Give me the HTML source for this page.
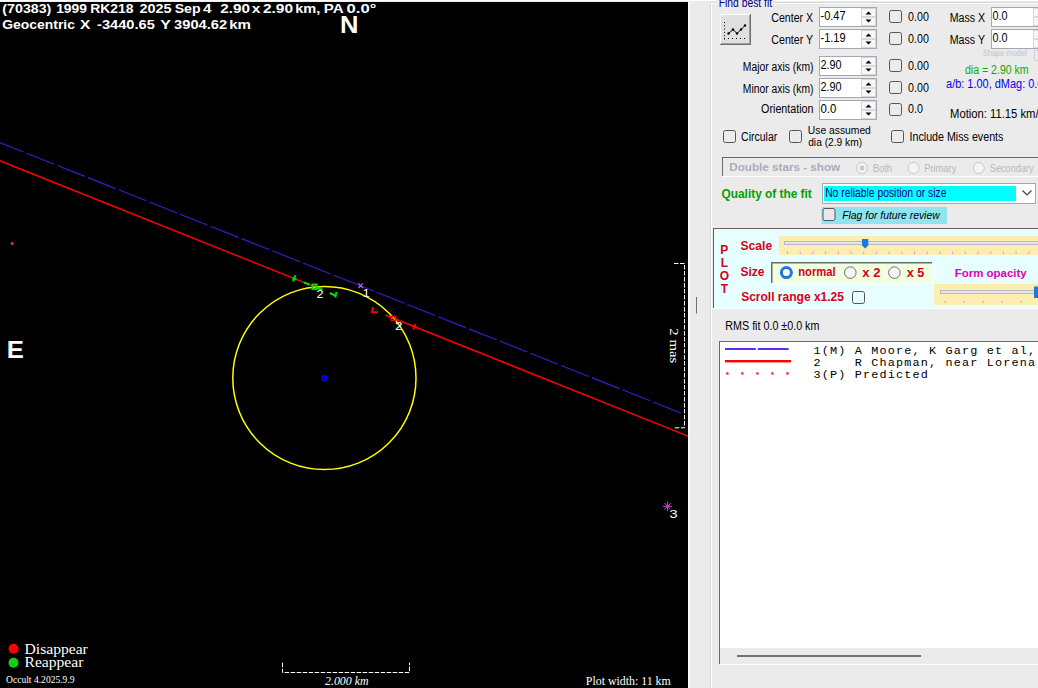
<!DOCTYPE html>
<html><head><meta charset="utf-8"><title>Occult</title>
<style>html,body{margin:0;padding:0;overflow:hidden;background:#ebebeb;}svg{display:block}</style></head>
<body><svg width="1038" height="688" viewBox="0 0 1038 688">
<rect x="0" y="0" width="1038" height="688" fill="#ebebeb" stroke="none" stroke-width="1" />
<rect x="0" y="0" width="1038" height="1" fill="#ffffff" stroke="none" stroke-width="1" />
<rect x="0" y="2" width="688" height="686" fill="#000" stroke="none" stroke-width="1" />
<text x="2.39" y="13" font-family='"Liberation Sans", sans-serif' font-size="13.5" fill="#ffffff" font-weight="bold" font-style="normal" textLength="48.98" lengthAdjust="spacingAndGlyphs" xml:space="preserve" >(70383)</text>
<text x="56.17" y="13" font-family='"Liberation Sans", sans-serif' font-size="13.5" fill="#ffffff" font-weight="bold" font-style="normal" textLength="30.71" lengthAdjust="spacingAndGlyphs" xml:space="preserve" >1999</text>
<text x="90.3" y="13" font-family='"Liberation Sans", sans-serif' font-size="13.5" fill="#ffffff" font-weight="bold" font-style="normal" textLength="43.26" lengthAdjust="spacingAndGlyphs" xml:space="preserve" >RK218</text>
<text x="139.49" y="13" font-family='"Liberation Sans", sans-serif' font-size="13.5" fill="#ffffff" font-weight="bold" font-style="normal" textLength="32.16" lengthAdjust="spacingAndGlyphs" xml:space="preserve" >2025</text>
<text x="174.68" y="13" font-family='"Liberation Sans", sans-serif' font-size="13.5" fill="#ffffff" font-weight="bold" font-style="normal" textLength="25.98" lengthAdjust="spacingAndGlyphs" xml:space="preserve" >Sep</text>
<text x="203.07" y="13" font-family='"Liberation Sans", sans-serif' font-size="13.5" fill="#ffffff" font-weight="bold" font-style="normal" textLength="8.42" lengthAdjust="spacingAndGlyphs" xml:space="preserve" >4</text>
<text x="220.27" y="13" font-family='"Liberation Sans", sans-serif' font-size="13.5" fill="#ffffff" font-weight="bold" font-style="normal" textLength="29.66" lengthAdjust="spacingAndGlyphs" xml:space="preserve" >2.90</text>
<text x="251.84" y="13" font-family='"Liberation Sans", sans-serif' font-size="13.5" fill="#ffffff" font-weight="bold" font-style="normal" textLength="8.65" lengthAdjust="spacingAndGlyphs" xml:space="preserve" >x</text>
<text x="262.96" y="13" font-family='"Liberation Sans", sans-serif' font-size="13.5" fill="#ffffff" font-weight="bold" font-style="normal" textLength="30.08" lengthAdjust="spacingAndGlyphs" xml:space="preserve" >2.90</text>
<text x="295.28" y="13" font-family='"Liberation Sans", sans-serif' font-size="13.5" fill="#ffffff" font-weight="bold" font-style="normal" textLength="25.11" lengthAdjust="spacingAndGlyphs" xml:space="preserve" >km,</text>
<text x="323.82" y="13" font-family='"Liberation Sans", sans-serif' font-size="13.5" fill="#ffffff" font-weight="bold" font-style="normal" textLength="19.86" lengthAdjust="spacingAndGlyphs" xml:space="preserve" >PA</text>
<text x="346.53" y="13" font-family='"Liberation Sans", sans-serif' font-size="13.5" fill="#ffffff" font-weight="bold" font-style="normal" textLength="29.82" lengthAdjust="spacingAndGlyphs" xml:space="preserve" >0.0°</text>
<text x="2.24" y="29" font-family='"Liberation Sans", sans-serif' font-size="13.5" fill="#ffffff" font-weight="bold" font-style="normal" textLength="72.66" lengthAdjust="spacingAndGlyphs" xml:space="preserve" >Geocentric</text>
<text x="80.04" y="29" font-family='"Liberation Sans", sans-serif' font-size="13.5" fill="#ffffff" font-weight="bold" font-style="normal" textLength="10.34" lengthAdjust="spacingAndGlyphs" xml:space="preserve" >X</text>
<text x="97.12" y="29" font-family='"Liberation Sans", sans-serif' font-size="13.5" fill="#ffffff" font-weight="bold" font-style="normal" textLength="57.69" lengthAdjust="spacingAndGlyphs" xml:space="preserve" >-3440.65</text>
<text x="160.38" y="29" font-family='"Liberation Sans", sans-serif' font-size="13.5" fill="#ffffff" font-weight="bold" font-style="normal" textLength="10.59" lengthAdjust="spacingAndGlyphs" xml:space="preserve" >Y</text>
<text x="174.13" y="29" font-family='"Liberation Sans", sans-serif' font-size="13.5" fill="#ffffff" font-weight="bold" font-style="normal" textLength="52.95" lengthAdjust="spacingAndGlyphs" xml:space="preserve" >3904.62</text>
<text x="229.15" y="29" font-family='"Liberation Sans", sans-serif' font-size="13.5" fill="#ffffff" font-weight="bold" font-style="normal" textLength="21.76" lengthAdjust="spacingAndGlyphs" xml:space="preserve" >km</text>
<text x="339.94" y="33" font-family='"Liberation Sans", sans-serif' font-size="23.5" fill="#ffffff" font-weight="bold" font-style="normal" textLength="18.48" lengthAdjust="spacingAndGlyphs" xml:space="preserve" >N</text>
<text x="6.83" y="358.3" font-family='"Liberation Sans", sans-serif' font-size="23.5" fill="#ffffff" font-weight="bold" font-style="normal" textLength="17.12" lengthAdjust="spacingAndGlyphs" xml:space="preserve" >E</text>
<circle cx="12.2" cy="243.6" r="1.5" fill="#ff1493"/>
<line x1="-5.00" y1="140.71" x2="23.45" y2="152.01" stroke="#4a14d0" stroke-width="1.15"/>
<line x1="26.55" y1="153.24" x2="54.17" y2="164.21" stroke="#4a14d0" stroke-width="1.15"/>
<line x1="57.27" y1="165.44" x2="84.89" y2="176.40" stroke="#4a14d0" stroke-width="1.15"/>
<line x1="87.99" y1="177.63" x2="115.61" y2="188.60" stroke="#4a14d0" stroke-width="1.15"/>
<line x1="118.71" y1="189.83" x2="146.33" y2="200.79" stroke="#4a14d0" stroke-width="1.15"/>
<line x1="149.43" y1="202.02" x2="177.05" y2="212.99" stroke="#4a14d0" stroke-width="1.15"/>
<line x1="180.15" y1="214.22" x2="207.77" y2="225.18" stroke="#4a14d0" stroke-width="1.15"/>
<line x1="210.87" y1="226.42" x2="238.49" y2="237.38" stroke="#4a14d0" stroke-width="1.15"/>
<line x1="241.59" y1="238.61" x2="269.21" y2="249.58" stroke="#4a14d0" stroke-width="1.15"/>
<line x1="272.31" y1="250.81" x2="299.93" y2="261.77" stroke="#4a14d0" stroke-width="1.15"/>
<line x1="303.03" y1="263.00" x2="330.65" y2="273.97" stroke="#4a14d0" stroke-width="1.15"/>
<line x1="333.75" y1="275.20" x2="373.65" y2="291.04" stroke="#4a14d0" stroke-width="1.15"/>
<line x1="376.75" y1="292.27" x2="404.37" y2="303.23" stroke="#4a14d0" stroke-width="1.15"/>
<line x1="407.47" y1="304.47" x2="435.09" y2="315.43" stroke="#4a14d0" stroke-width="1.15"/>
<line x1="438.19" y1="316.66" x2="465.81" y2="327.63" stroke="#4a14d0" stroke-width="1.15"/>
<line x1="468.91" y1="328.86" x2="496.53" y2="339.82" stroke="#4a14d0" stroke-width="1.15"/>
<line x1="499.63" y1="341.05" x2="527.25" y2="352.02" stroke="#4a14d0" stroke-width="1.15"/>
<line x1="530.35" y1="353.25" x2="557.97" y2="364.21" stroke="#4a14d0" stroke-width="1.15"/>
<line x1="561.07" y1="365.44" x2="588.69" y2="376.41" stroke="#4a14d0" stroke-width="1.15"/>
<line x1="591.79" y1="377.64" x2="619.41" y2="388.61" stroke="#4a14d0" stroke-width="1.15"/>
<line x1="622.51" y1="389.84" x2="650.13" y2="400.80" stroke="#4a14d0" stroke-width="1.15"/>
<line x1="653.23" y1="402.03" x2="680.80" y2="412.98" stroke="#4a14d0" stroke-width="1.15"/>
<line x1="-2" y1="160.1" x2="314.5" y2="286.70000000000005" stroke="#ff0000" stroke-width="1.45" />
<line x1="385.3" y1="315.02" x2="688" y2="436.1" stroke="#ff0000" stroke-width="1.45" />
<circle cx="324.4" cy="378" r="91.6" fill="none" stroke="#ffff00" stroke-width="1.5"/>
<circle cx="324.5" cy="378.1" r="2.1" fill="#000" stroke="#0000ff" stroke-width="2.2"/>
<polyline points="674,263.5 684.5,263.5 684.5,427.8 674,427.8" fill="none" stroke="#fff" stroke-width="1" stroke-dasharray="4.5 1.5"/>
<text x="0" y="0" transform="translate(670,328.3) rotate(90)" font-family='"Liberation Serif", serif' font-size="13.5" fill="#fff" textLength="35" lengthAdjust="spacingAndGlyphs">2 mas</text>
<polyline points="282.5,662.7 282.5,672.5 409.5,672.5 409.5,662.7" fill="none" stroke="#fff" stroke-width="1" stroke-dasharray="4.5 1.5"/>
<text x="325.0" y="685.4" font-family='"Liberation Serif", serif' font-size="12.5" fill="#ffffff" font-weight="normal" font-style="italic" textLength="43.49" lengthAdjust="spacingAndGlyphs" xml:space="preserve" >2.000 km</text>
<text x="585.84" y="685.2" font-family='"Liberation Serif", serif' font-size="12.5" fill="#ffffff" font-weight="normal" font-style="normal" textLength="84.91" lengthAdjust="spacingAndGlyphs" xml:space="preserve" >Plot width: 11 km</text>
<circle cx="13.5" cy="648.7" r="5" fill="#ff0000"/>
<circle cx="13.5" cy="662.8" r="5" fill="#10d010"/>
<text x="24.53" y="653.5" font-family='"Liberation Serif", serif' font-size="13.6" fill="#ffffff" font-weight="normal" font-style="normal" textLength="63.3" lengthAdjust="spacingAndGlyphs" xml:space="preserve" >Disappear</text>
<text x="24.53" y="667" font-family='"Liberation Serif", serif' font-size="13.6" fill="#ffffff" font-weight="normal" font-style="normal" textLength="58.83" lengthAdjust="spacingAndGlyphs" xml:space="preserve" >Reappear</text>
<text x="6.02" y="683" font-family='"Liberation Serif", serif' font-size="9.8" fill="#ffffff" font-weight="normal" font-style="normal" textLength="68.57" lengthAdjust="spacingAndGlyphs" xml:space="preserve" >Occult 4.2025.9.9</text>
<line x1="663.1" y1="506.3" x2="672.1" y2="506.3" stroke="#e040e0" stroke-width="1" />
<line x1="664.42" y1="503.12" x2="670.78" y2="509.48" stroke="#e040e0" stroke-width="1" />
<line x1="667.6" y1="501.8" x2="667.6" y2="510.8" stroke="#e040e0" stroke-width="1" />
<line x1="670.78" y1="503.12" x2="664.42" y2="509.48" stroke="#e040e0" stroke-width="1" />
<text x="669.52" y="517.7" font-family='"Liberation Sans", sans-serif' font-size="11" fill="#ffffff" font-weight="normal" font-style="normal" textLength="8.08" lengthAdjust="spacingAndGlyphs" xml:space="preserve" >3</text>
<path d="M295.5,275 L293,281.5 M292.3,278.5 L296.5,279.5" stroke="#00dd00" stroke-width="2" fill="none"/>
<line x1="303.9" y1="282.46000000000004" x2="309.7" y2="284.78" stroke="#00dd00" stroke-width="2.2" />
<line x1="316.6" y1="287.54" x2="322.4" y2="289.86" stroke="#00dd00" stroke-width="2.2" />
<rect x="312.5" y="284.5" width="4" height="4.6" fill="none" stroke="#00dd00" stroke-width="2"/>
<text x="316.56" y="297.7" font-family='"Liberation Sans", sans-serif' font-size="11" fill="#ffffff" font-weight="normal" font-style="normal" textLength="7.09" lengthAdjust="spacingAndGlyphs" xml:space="preserve" >2</text>
<path d="M329.8,293 L335,295.5 M336.5,292 L335.3,297.5" stroke="#00dd00" stroke-width="2" fill="none"/>
<path d="M358.3,283.3 L363,288 M358.3,288 L363,283.3" stroke="#a070f0" stroke-width="1.2" fill="none"/>
<text x="362.87" y="296.5" font-family='"Liberation Sans", sans-serif' font-size="11" fill="#ffffff" font-weight="normal" font-style="normal" textLength="6.9" lengthAdjust="spacingAndGlyphs" xml:space="preserve" >1</text>
<path d="M373.2,307 L371.5,313 M371,312 L377.8,312.2" stroke="#ff0000" stroke-width="2" fill="none"/>
<rect x="391.5" y="316.5" width="4" height="4" fill="none" stroke="#ff0000" stroke-width="1.6"/>
<text x="395.13" y="329.6" font-family='"Liberation Sans", sans-serif' font-size="11" fill="#ffffff" font-weight="normal" font-style="normal" textLength="7.46" lengthAdjust="spacingAndGlyphs" xml:space="preserve" >2</text>
<path d="M415.5,324 L413.3,329.5 M412.3,326 L417,327.5" stroke="#ff0000" stroke-width="2" fill="none"/>
<rect x="688" y="2" width="1.5" height="686" fill="#ffffff" stroke="none" stroke-width="1" />
<rect x="710" y="2" width="1" height="686" fill="#d8d8d8" stroke="none" stroke-width="1" />
<rect x="711" y="2" width="1" height="686" fill="#ffffff" stroke="none" stroke-width="1" />
<rect x="710" y="2" width="328" height="1" fill="#d8d8d8" stroke="none" stroke-width="1" />
<rect x="710" y="3" width="328" height="1" fill="#ffffff" stroke="none" stroke-width="1" />
<rect x="716" y="0" width="58" height="8" fill="#ebebeb" stroke="none" stroke-width="1" />
<text x="718.67" y="6.6" font-family='"Liberation Sans", sans-serif' font-size="12" fill="#000080" font-weight="normal" font-style="normal" textLength="53.42" lengthAdjust="spacingAndGlyphs" xml:space="preserve" >Find best fit</text>
<rect x="720" y="14" width="31" height="31" fill="#e0e0e0" stroke="none" stroke-width="1" />
<rect x="720" y="14" width="31" height="1" fill="#fff" stroke="none" stroke-width="1" />
<rect x="720" y="14" width="1" height="31" fill="#fff" stroke="none" stroke-width="1" />
<rect x="720" y="44" width="31" height="1" fill="#707070" stroke="none" stroke-width="1" />
<rect x="750" y="14" width="1" height="31" fill="#707070" stroke="none" stroke-width="1" />
<rect x="721" y="43" width="29" height="1" fill="#a0a0a0" stroke="none" stroke-width="1" />
<rect x="749" y="15" width="1" height="29" fill="#a0a0a0" stroke="none" stroke-width="1" />
<rect x="724" y="22.0" width="1" height="1" fill="#000" stroke="none" stroke-width="1" />
<rect x="724" y="25.3" width="1" height="1" fill="#000" stroke="none" stroke-width="1" />
<rect x="724" y="28.6" width="1" height="1" fill="#000" stroke="none" stroke-width="1" />
<rect x="724" y="31.9" width="1" height="1" fill="#000" stroke="none" stroke-width="1" />
<rect x="724" y="35.2" width="1" height="1" fill="#000" stroke="none" stroke-width="1" />
<rect x="724" y="38.5" width="1" height="1" fill="#000" stroke="none" stroke-width="1" />
<rect x="724" y="38" width="1" height="1" fill="#000" stroke="none" stroke-width="1" />
<rect x="728" y="38" width="1" height="1" fill="#000" stroke="none" stroke-width="1" />
<rect x="732" y="38" width="1" height="1" fill="#000" stroke="none" stroke-width="1" />
<rect x="736" y="38" width="1" height="1" fill="#000" stroke="none" stroke-width="1" />
<rect x="740" y="38" width="1" height="1" fill="#000" stroke="none" stroke-width="1" />
<rect x="744" y="38" width="1" height="1" fill="#000" stroke="none" stroke-width="1" />
<polyline points="728.5,33.5 733,29.5 737,33.5 741,29.5 745,25.5" fill="none" stroke="#000" stroke-width="1"/>
<circle cx="728.5" cy="33.5" r="1.2" fill="#000"/>
<circle cx="733" cy="29.5" r="1.2" fill="#000"/>
<circle cx="737" cy="33.5" r="1.2" fill="#000"/>
<circle cx="741" cy="29.5" r="1.2" fill="#000"/>
<circle cx="745" cy="25.5" r="1.2" fill="#000"/>
<text x="771.37" y="21.7" font-family='"Liberation Sans", sans-serif' font-size="12" fill="#000" font-weight="normal" font-style="normal" textLength="41.65" lengthAdjust="spacingAndGlyphs" xml:space="preserve" >Center X</text>
<rect x="819.5" y="7.5" width="57" height="19" fill="#fff" stroke="#a4a8b0" stroke-width="1" />
<text x="820.51" y="19.8" font-family='"Liberation Sans", sans-serif' font-size="12" fill="#000" font-weight="normal" font-style="normal" textLength="25.04" lengthAdjust="spacingAndGlyphs" xml:space="preserve" >-0.47</text>
<rect x="861.5" y="8.5" width="14" height="8.0" fill="#f8f8f8" stroke="#d8d8d8" stroke-width="1" />
<rect x="861.5" y="17.5" width="14" height="8.0" fill="#f8f8f8" stroke="#d8d8d8" stroke-width="1" />
<polygon points="865.5,14.5 871.5,14.5 868.5,11.5" fill="#000"/>
<polygon points="865.5,19.5 871.5,19.5 868.5,22.5" fill="#000"/>
<rect x="889.5" y="10.5" width="12" height="12" fill="none" stroke="#555" stroke-width="1" rx="2"/>
<text x="908.07" y="21.2" font-family='"Liberation Sans", sans-serif' font-size="12" fill="#000" font-weight="normal" font-style="normal" textLength="20.82" lengthAdjust="spacingAndGlyphs" xml:space="preserve" >0.00</text>
<text x="771.37" y="43.7" font-family='"Liberation Sans", sans-serif' font-size="12" fill="#000" font-weight="normal" font-style="normal" textLength="41.68" lengthAdjust="spacingAndGlyphs" xml:space="preserve" >Center Y</text>
<rect x="819.5" y="29.5" width="57" height="19" fill="#fff" stroke="#a4a8b0" stroke-width="1" />
<text x="820.51" y="41.8" font-family='"Liberation Sans", sans-serif' font-size="12" fill="#000" font-weight="normal" font-style="normal" textLength="24.98" lengthAdjust="spacingAndGlyphs" xml:space="preserve" >-1.19</text>
<rect x="861.5" y="30.5" width="14" height="8.0" fill="#f8f8f8" stroke="#d8d8d8" stroke-width="1" />
<rect x="861.5" y="39.5" width="14" height="8.0" fill="#f8f8f8" stroke="#d8d8d8" stroke-width="1" />
<polygon points="865.5,36.5 871.5,36.5 868.5,33.5" fill="#000"/>
<polygon points="865.5,41.5 871.5,41.5 868.5,44.5" fill="#000"/>
<rect x="889.5" y="32.5" width="12" height="12" fill="none" stroke="#555" stroke-width="1" rx="2"/>
<text x="908.07" y="43.2" font-family='"Liberation Sans", sans-serif' font-size="12" fill="#000" font-weight="normal" font-style="normal" textLength="20.82" lengthAdjust="spacingAndGlyphs" xml:space="preserve" >0.00</text>
<text x="742.77" y="70.8" font-family='"Liberation Sans", sans-serif' font-size="12" fill="#000" font-weight="normal" font-style="normal" textLength="70.69" lengthAdjust="spacingAndGlyphs" xml:space="preserve" >Major axis (km)</text>
<rect x="819.5" y="56.5" width="57" height="19" fill="#fff" stroke="#a4a8b0" stroke-width="1" />
<text x="820.46" y="68.8" font-family='"Liberation Sans", sans-serif' font-size="12" fill="#000" font-weight="normal" font-style="normal" textLength="21.14" lengthAdjust="spacingAndGlyphs" xml:space="preserve" >2.90</text>
<rect x="861.5" y="57.5" width="14" height="8.0" fill="#f8f8f8" stroke="#d8d8d8" stroke-width="1" />
<rect x="861.5" y="66.5" width="14" height="8.0" fill="#f8f8f8" stroke="#d8d8d8" stroke-width="1" />
<polygon points="865.5,63.5 871.5,63.5 868.5,60.5" fill="#000"/>
<polygon points="865.5,68.5 871.5,68.5 868.5,71.5" fill="#000"/>
<rect x="889.5" y="59.5" width="12" height="12" fill="none" stroke="#555" stroke-width="1" rx="2"/>
<text x="908.07" y="70.3" font-family='"Liberation Sans", sans-serif' font-size="12" fill="#000" font-weight="normal" font-style="normal" textLength="20.82" lengthAdjust="spacingAndGlyphs" xml:space="preserve" >0.00</text>
<text x="742.77" y="92.5" font-family='"Liberation Sans", sans-serif' font-size="12" fill="#000" font-weight="normal" font-style="normal" textLength="70.69" lengthAdjust="spacingAndGlyphs" xml:space="preserve" >Minor axis (km)</text>
<rect x="819.5" y="78.5" width="57" height="19" fill="#fff" stroke="#a4a8b0" stroke-width="1" />
<text x="820.46" y="90.8" font-family='"Liberation Sans", sans-serif' font-size="12" fill="#000" font-weight="normal" font-style="normal" textLength="21.14" lengthAdjust="spacingAndGlyphs" xml:space="preserve" >2.90</text>
<rect x="861.5" y="79.5" width="14" height="8.0" fill="#f8f8f8" stroke="#d8d8d8" stroke-width="1" />
<rect x="861.5" y="88.5" width="14" height="8.0" fill="#f8f8f8" stroke="#d8d8d8" stroke-width="1" />
<polygon points="865.5,85.5 871.5,85.5 868.5,82.5" fill="#000"/>
<polygon points="865.5,90.5 871.5,90.5 868.5,93.5" fill="#000"/>
<rect x="889.5" y="81.5" width="12" height="12" fill="none" stroke="#555" stroke-width="1" rx="2"/>
<text x="908.07" y="92.0" font-family='"Liberation Sans", sans-serif' font-size="12" fill="#000" font-weight="normal" font-style="normal" textLength="20.82" lengthAdjust="spacingAndGlyphs" xml:space="preserve" >0.00</text>
<text x="761.12" y="113.3" font-family='"Liberation Sans", sans-serif' font-size="12" fill="#000" font-weight="normal" font-style="normal" textLength="52.4" lengthAdjust="spacingAndGlyphs" xml:space="preserve" >Orientation</text>
<rect x="819.5" y="100.5" width="57" height="19" fill="#fff" stroke="#a4a8b0" stroke-width="1" />
<text x="820.54" y="112.8" font-family='"Liberation Sans", sans-serif' font-size="12" fill="#000" font-weight="normal" font-style="normal" textLength="15.86" lengthAdjust="spacingAndGlyphs" xml:space="preserve" >0.0</text>
<rect x="861.5" y="101.5" width="14" height="8.0" fill="#f8f8f8" stroke="#d8d8d8" stroke-width="1" />
<rect x="861.5" y="110.5" width="14" height="8.0" fill="#f8f8f8" stroke="#d8d8d8" stroke-width="1" />
<polygon points="865.5,107.5 871.5,107.5 868.5,104.5" fill="#000"/>
<polygon points="865.5,112.5 871.5,112.5 868.5,115.5" fill="#000"/>
<rect x="889.5" y="103.5" width="12" height="12" fill="none" stroke="#555" stroke-width="1" rx="2"/>
<text x="908.07" y="112.8" font-family='"Liberation Sans", sans-serif' font-size="12" fill="#000" font-weight="normal" font-style="normal" textLength="14.91" lengthAdjust="spacingAndGlyphs" xml:space="preserve" >0.0</text>
<text x="949.65" y="21.8" font-family='"Liberation Sans", sans-serif' font-size="12" fill="#000" font-weight="normal" font-style="normal" textLength="35.41" lengthAdjust="spacingAndGlyphs" xml:space="preserve" >Mass X</text>
<text x="949.65" y="43.8" font-family='"Liberation Sans", sans-serif' font-size="12" fill="#000" font-weight="normal" font-style="normal" textLength="35.38" lengthAdjust="spacingAndGlyphs" xml:space="preserve" >Mass Y</text>
<rect x="991.5" y="7.5" width="57" height="19" fill="#fff" stroke="#a4a8b0" stroke-width="1" />
<text x="992.57" y="19.8" font-family='"Liberation Sans", sans-serif' font-size="12" fill="#000" font-weight="normal" font-style="normal" textLength="15.01" lengthAdjust="spacingAndGlyphs" xml:space="preserve" >0.0</text>
<rect x="1033.5" y="8.5" width="14" height="8.0" fill="#f8f8f8" stroke="#d8d8d8" stroke-width="1" />
<rect x="1033.5" y="17.5" width="14" height="8.0" fill="#f8f8f8" stroke="#d8d8d8" stroke-width="1" />
<polygon points="1037.5,14.5 1043.5,14.5 1040.5,11.5" fill="#000"/>
<polygon points="1037.5,19.5 1043.5,19.5 1040.5,22.5" fill="#000"/>
<rect x="991.5" y="29.5" width="57" height="19" fill="#fff" stroke="#a4a8b0" stroke-width="1" />
<text x="992.57" y="41.8" font-family='"Liberation Sans", sans-serif' font-size="12" fill="#000" font-weight="normal" font-style="normal" textLength="15.01" lengthAdjust="spacingAndGlyphs" xml:space="preserve" >0.0</text>
<rect x="1033.5" y="30.5" width="14" height="8.0" fill="#f8f8f8" stroke="#d8d8d8" stroke-width="1" />
<rect x="1033.5" y="39.5" width="14" height="8.0" fill="#f8f8f8" stroke="#d8d8d8" stroke-width="1" />
<polygon points="1037.5,36.5 1043.5,36.5 1040.5,33.5" fill="#000"/>
<polygon points="1037.5,41.5 1043.5,41.5 1040.5,44.5" fill="#000"/>
<text x="982.76" y="56" font-family='"Liberation Sans", sans-serif' font-size="9" fill="#c4c4cc" font-weight="normal" font-style="normal" textLength="44.05" lengthAdjust="spacingAndGlyphs" xml:space="preserve" >Shape model</text>
<rect x="1034.5" y="50.5" width="8" height="10" fill="none" stroke="#d0d0d0" stroke-width="1" />
<text x="964.98" y="73.7" font-family='"Liberation Sans", sans-serif' font-size="12" fill="#10a800" font-weight="normal" font-style="normal" textLength="63.67" lengthAdjust="spacingAndGlyphs" xml:space="preserve" >dia = 2.90 km</text>
<text x="946.06" y="87.9" font-family='"Liberation Sans", sans-serif' font-size="12" fill="#0000ff" font-weight="normal" font-style="normal" textLength="97.41" lengthAdjust="spacingAndGlyphs" xml:space="preserve" >a/b: 1.00, dMag: 0.0</text>
<text x="950.1" y="118" font-family='"Liberation Sans", sans-serif' font-size="12" fill="#000" font-weight="normal" font-style="normal" textLength="94.09" lengthAdjust="spacingAndGlyphs" xml:space="preserve" >Motion: 11.15 km/s</text>
<rect x="723.5" y="130.5" width="12" height="12" fill="none" stroke="#555" stroke-width="1" rx="2"/>
<text x="741.08" y="140.8" font-family='"Liberation Sans", sans-serif' font-size="12" fill="#000" font-weight="normal" font-style="normal" textLength="36.13" lengthAdjust="spacingAndGlyphs" xml:space="preserve" >Circular</text>
<rect x="789.5" y="130.5" width="12" height="12" fill="none" stroke="#555" stroke-width="1" rx="2"/>
<text x="807.83" y="134.2" font-family='"Liberation Sans", sans-serif' font-size="11.5" fill="#000" font-weight="normal" font-style="normal" textLength="63.03" lengthAdjust="spacingAndGlyphs" xml:space="preserve" >Use assumed</text>
<text x="808.19" y="146.4" font-family='"Liberation Sans", sans-serif' font-size="11.5" fill="#000" font-weight="normal" font-style="normal" textLength="53.87" lengthAdjust="spacingAndGlyphs" xml:space="preserve" >dia (2.9 km)</text>
<rect x="891.5" y="130.5" width="12" height="12" fill="none" stroke="#555" stroke-width="1" rx="2"/>
<text x="909.54" y="140.7" font-family='"Liberation Sans", sans-serif' font-size="12" fill="#000" font-weight="normal" font-style="normal" textLength="93.86" lengthAdjust="spacingAndGlyphs" xml:space="preserve" >Include Miss events</text>
<rect x="722" y="157" width="316" height="1" fill="#6a6a6a" stroke="none" stroke-width="1" />
<rect x="722" y="157" width="1" height="19" fill="#6a6a6a" stroke="none" stroke-width="1" />
<rect x="722" y="176" width="316" height="1" fill="#ffffff" stroke="none" stroke-width="1" />
<text x="729.24" y="170.6" font-family='"Liberation Sans", sans-serif' font-size="11.5" fill="#b0aab8" font-weight="bold" font-style="normal" textLength="110.92" lengthAdjust="spacingAndGlyphs" xml:space="preserve" >Double stars - show</text>
<circle cx="862" cy="168" r="5.5" fill="#f4f4f4" stroke="#c8c8c8" stroke-width="1"/>
<text x="872.64" y="171.8" font-family='"Liberation Sans", sans-serif' font-size="10" fill="#b8b8c0" font-weight="normal" font-style="normal" textLength="19.49" lengthAdjust="spacingAndGlyphs" xml:space="preserve" >Both</text>
<circle cx="913.5" cy="168" r="5.5" fill="#f4f4f4" stroke="#c8c8c8" stroke-width="1"/>
<text x="924.15" y="171.8" font-family='"Liberation Sans", sans-serif' font-size="10" fill="#b8b8c0" font-weight="normal" font-style="normal" textLength="32.24" lengthAdjust="spacingAndGlyphs" xml:space="preserve" >Primary</text>
<circle cx="978.8" cy="168" r="5.5" fill="#f4f4f4" stroke="#c8c8c8" stroke-width="1"/>
<text x="989.79" y="171.8" font-family='"Liberation Sans", sans-serif' font-size="10" fill="#b8b8c0" font-weight="normal" font-style="normal" textLength="43.92" lengthAdjust="spacingAndGlyphs" xml:space="preserve" >Secondary</text>
<circle cx="862" cy="168" r="2.5" fill="#c8c8c8"/>
<text x="721.53" y="198" font-family='"Liberation Sans", sans-serif' font-size="12" fill="#00a000" font-weight="bold" font-style="normal" textLength="90.31" lengthAdjust="spacingAndGlyphs" xml:space="preserve" >Quality of the fit</text>
<rect x="822.5" y="183.5" width="213" height="20" fill="#fff" stroke="#a8a8a8" stroke-width="1" />
<rect x="824" y="186" width="192" height="15" fill="#00ffff" stroke="none" stroke-width="1" />
<text x="825.17" y="196.6" font-family='"Liberation Sans", sans-serif' font-size="12" fill="#000080" font-weight="normal" font-style="normal" textLength="121.23" lengthAdjust="spacingAndGlyphs" xml:space="preserve" >No reliable position or size</text>
<polyline points="1022.5,190.5 1027,195 1031.5,190.5" fill="none" stroke="#404040" stroke-width="1.2"/>
<rect x="821.5" y="207" width="125.5" height="17" fill="#90e4f0" stroke="none" stroke-width="1" />
<rect x="823.0" y="208.5" width="12" height="12" fill="#e8e8ec" stroke="#555" stroke-width="1" rx="2"/>
<text x="842.19" y="218.8" font-family='"Liberation Sans", sans-serif' font-size="11.5" fill="#000" font-weight="normal" font-style="italic" textLength="97.47" lengthAdjust="spacingAndGlyphs" xml:space="preserve" >Flag for future review</text>
<rect x="713" y="228" width="325" height="80" fill="#e8ffff" stroke="none" stroke-width="1" />
<rect x="713" y="228" width="325" height="1" fill="#6a5a6a" stroke="none" stroke-width="1" />
<rect x="713" y="228" width="1" height="80" fill="#6a5a6a" stroke="none" stroke-width="1" />
<rect x="713" y="308" width="325" height="1" fill="#ffffff" stroke="none" stroke-width="1" />
<text x="724.3" y="253.5" font-family='"Liberation Sans", sans-serif' font-size="12" fill="#d40020" font-weight="bold" text-anchor="middle">P</text>
<text x="724.3" y="266.8" font-family='"Liberation Sans", sans-serif' font-size="12" fill="#d40020" font-weight="bold" text-anchor="middle">L</text>
<text x="724.3" y="280" font-family='"Liberation Sans", sans-serif' font-size="12" fill="#d40020" font-weight="bold" text-anchor="middle">O</text>
<text x="724.3" y="293" font-family='"Liberation Sans", sans-serif' font-size="12" fill="#d40020" font-weight="bold" text-anchor="middle">T</text>
<text x="740.54" y="249.7" font-family='"Liberation Sans", sans-serif' font-size="12" fill="#d40020" font-weight="bold" font-style="normal" textLength="31.63" lengthAdjust="spacingAndGlyphs" xml:space="preserve" >Scale</text>
<rect x="779" y="236" width="259" height="19" fill="#fcedb0" stroke="none" stroke-width="1" />
<rect x="784.5" y="241.5" width="254" height="3" fill="#e4e4ec" stroke="#b8b8c8" stroke-width="1" />
<path d="M862,239 h6.3 v6.5 l-3.15,3 l-3.15,-3 z" fill="#1e78e0"/>
<rect x="787.0" y="251.5" width="1" height="2.5" fill="#e890e0" stroke="none" stroke-width="1" />
<rect x="799.7" y="251.5" width="1" height="2.5" fill="#e890e0" stroke="none" stroke-width="1" />
<rect x="812.4" y="251.5" width="1" height="2.5" fill="#e890e0" stroke="none" stroke-width="1" />
<rect x="825.1" y="251.5" width="1" height="2.5" fill="#e890e0" stroke="none" stroke-width="1" />
<rect x="837.8" y="251.5" width="1" height="2.5" fill="#e890e0" stroke="none" stroke-width="1" />
<rect x="850.5" y="251.5" width="1" height="2.5" fill="#e890e0" stroke="none" stroke-width="1" />
<rect x="863.2" y="251.5" width="1" height="2.5" fill="#e890e0" stroke="none" stroke-width="1" />
<rect x="875.9" y="251.5" width="1" height="2.5" fill="#e890e0" stroke="none" stroke-width="1" />
<rect x="888.6" y="251.5" width="1" height="2.5" fill="#e890e0" stroke="none" stroke-width="1" />
<rect x="901.3" y="251.5" width="1" height="2.5" fill="#e890e0" stroke="none" stroke-width="1" />
<rect x="914.0" y="251.5" width="1" height="2.5" fill="#e890e0" stroke="none" stroke-width="1" />
<rect x="926.7" y="251.5" width="1" height="2.5" fill="#e890e0" stroke="none" stroke-width="1" />
<rect x="939.4" y="251.5" width="1" height="2.5" fill="#e890e0" stroke="none" stroke-width="1" />
<rect x="952.1" y="251.5" width="1" height="2.5" fill="#e890e0" stroke="none" stroke-width="1" />
<rect x="964.8" y="251.5" width="1" height="2.5" fill="#e890e0" stroke="none" stroke-width="1" />
<rect x="977.5" y="251.5" width="1" height="2.5" fill="#e890e0" stroke="none" stroke-width="1" />
<rect x="990.2" y="251.5" width="1" height="2.5" fill="#e890e0" stroke="none" stroke-width="1" />
<rect x="1002.9" y="251.5" width="1" height="2.5" fill="#e890e0" stroke="none" stroke-width="1" />
<rect x="1015.6" y="251.5" width="1" height="2.5" fill="#e890e0" stroke="none" stroke-width="1" />
<rect x="1028.3" y="251.5" width="1" height="2.5" fill="#e890e0" stroke="none" stroke-width="1" />
<text x="740.54" y="275.5" font-family='"Liberation Sans", sans-serif' font-size="12" fill="#d40020" font-weight="bold" font-style="normal" textLength="23.89" lengthAdjust="spacingAndGlyphs" xml:space="preserve" >Size</text>
<rect x="771" y="262" width="162" height="21" fill="#f0ffe0" stroke="none" stroke-width="1" />
<rect x="771" y="262" width="162" height="1.5" fill="#6a6a6a" stroke="none" stroke-width="1" />
<rect x="771" y="262" width="1.5" height="21" fill="#6a6a6a" stroke="none" stroke-width="1" />
<rect x="771" y="283" width="162" height="1" fill="#ffffff" stroke="none" stroke-width="1" />
<rect x="932" y="262" width="1" height="21" fill="#ffffff" stroke="none" stroke-width="1" />
<circle cx="786.4" cy="272.6" r="5" fill="#fff" stroke="#1e78e0" stroke-width="3"/>
<text x="798.27" y="276.2" font-family='"Liberation Sans", sans-serif' font-size="12" fill="#d40020" font-weight="bold" font-style="normal" textLength="37.4" lengthAdjust="spacingAndGlyphs" xml:space="preserve" >normal</text>
<circle cx="850.3" cy="272.6" r="5.8" fill="#f4f4f4" stroke="#707070" stroke-width="1"/>
<text x="862.37" y="276.6" font-family='"Liberation Sans", sans-serif' font-size="12" fill="#d40020" font-weight="bold" font-style="normal" textLength="18.26" lengthAdjust="spacingAndGlyphs" xml:space="preserve" >x 2</text>
<circle cx="894.4" cy="272.6" r="5.8" fill="#f4f4f4" stroke="#707070" stroke-width="1"/>
<text x="906.67" y="276.6" font-family='"Liberation Sans", sans-serif' font-size="12" fill="#d40020" font-weight="bold" font-style="normal" textLength="17.65" lengthAdjust="spacingAndGlyphs" xml:space="preserve" >x 5</text>
<text x="954.76" y="276.6" font-family='"Liberation Sans", sans-serif' font-size="11.5" fill="#e000c0" font-weight="bold" font-style="normal" textLength="71.89" lengthAdjust="spacingAndGlyphs" xml:space="preserve" >Form opacity</text>
<text x="741.14" y="301.2" font-family='"Liberation Sans", sans-serif' font-size="12" fill="#d40020" font-weight="bold" font-style="normal" textLength="102.86" lengthAdjust="spacingAndGlyphs" xml:space="preserve" >Scroll range x1.25</text>
<rect x="852.5" y="291.5" width="12" height="12" fill="none" stroke="#555" stroke-width="1" rx="2"/>
<rect x="934" y="284" width="104" height="21" fill="#fcedb0" stroke="none" stroke-width="1" />
<rect x="940.5" y="290.5" width="95" height="3" fill="#e4e4ec" stroke="#b8b8c8" stroke-width="1" />
<path d="M1034,286.5 h5 v11.5 h-5 z" fill="#1e78e0"/>
<rect x="944.6" y="300.8" width="1" height="2.2" fill="#e890e0" stroke="none" stroke-width="1" />
<rect x="963.6" y="300.8" width="1" height="2.2" fill="#e890e0" stroke="none" stroke-width="1" />
<rect x="982.6" y="300.8" width="1" height="2.2" fill="#e890e0" stroke="none" stroke-width="1" />
<rect x="1001.6" y="300.8" width="1" height="2.2" fill="#e890e0" stroke="none" stroke-width="1" />
<rect x="1020.6" y="300.8" width="1" height="2.2" fill="#e890e0" stroke="none" stroke-width="1" />
<rect x="696" y="297" width="1" height="16.5" fill="#707070" stroke="none" stroke-width="1" />
<text x="725.34" y="330.4" font-family='"Liberation Sans", sans-serif' font-size="12" fill="#000" font-weight="normal" font-style="normal" textLength="94.04" lengthAdjust="spacingAndGlyphs" xml:space="preserve" >RMS fit 0.0 ±0.0 km</text>
<rect x="719" y="341" width="319" height="307" fill="#fff" stroke="none" stroke-width="1" />
<rect x="719" y="341" width="319" height="1" fill="#6a6a6a" stroke="none" stroke-width="1" />
<rect x="719" y="341" width="1" height="323" fill="#6a6a6a" stroke="none" stroke-width="1" />
<rect x="719" y="664" width="319" height="1" fill="#ffffff" stroke="none" stroke-width="1" />
<rect x="720" y="648" width="318" height="16" fill="#ebebeb" stroke="none" stroke-width="1" />
<rect x="737" y="655" width="184" height="2" fill="#707070" stroke="none" stroke-width="1" />
<line x1="725" y1="349" x2="788.6" y2="349" stroke="#5a2ee6" stroke-width="2" stroke-dasharray="30.8 2"/>
<rect x="725" y="360" width="66" height="2.4" fill="#ff0000" stroke="none" stroke-width="1" />
<circle cx="727.3" cy="373.5" r="1.4" fill="#ff30c0"/>
<circle cx="742.3499999999999" cy="373.5" r="1.4" fill="#ff30c0"/>
<circle cx="757.4" cy="373.5" r="1.4" fill="#ff30c0"/>
<circle cx="772.4499999999999" cy="373.5" r="1.4" fill="#ff30c0"/>
<circle cx="787.5" cy="373.5" r="1.4" fill="#ff30c0"/>
<text x="813.5" y="354" font-family='"Liberation Mono", monospace' font-size="11.8" letter-spacing="1.17" fill="#000" xml:space="preserve">1(M) A Moore, K Garg et al,</text>
<text x="813.5" y="366" font-family='"Liberation Mono", monospace' font-size="11.8" letter-spacing="1.17" fill="#000" xml:space="preserve">2    R Chapman, near Lorena</text>
<text x="813.5" y="378" font-family='"Liberation Mono", monospace' font-size="11.8" letter-spacing="1.17" fill="#000" xml:space="preserve">3(P) Predicted</text>
</svg></body></html>
